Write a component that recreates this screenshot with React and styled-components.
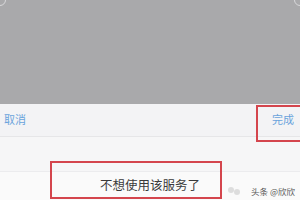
import styled, { createGlobalStyle } from 'styled-components';

const Global = createGlobalStyle`
	html, body {
		margin: 0;
		padding: 0;
	}
	body {
		width: 300px;
		height: 200px;
		overflow: hidden;
		background: #f7f7f8;
		font-family: "Noto Sans CJK SC", "Noto Sans", sans-serif;
	}
`

const Screen = styled.div`
	position: relative;
	width: 300px;
	height: 200px;
	overflow: hidden;
	display: flex;
	flex-direction: column;
`

const Mask = styled.div`
	height: 104px;
	background: #a9a9ab;
	flex-shrink: 0;
	position: relative;

	&::before, &::after{
		content: '';
		position: absolute;
		top: -6px;
		width: 10px;
		height: 10px;
		border: 1px solid #d8d8da;
		border-radius: 50%;
	}
	&::before{ left: -6px; }
	&::after{ right: -6px; }
`

const Toolbar = styled.div`
	height: 32px;
	display: flex;
	align-items: center;
	justify-content: space-between;
	padding: 0 6px 0 4px;
	background: #f3f3f5;
	border-bottom: 1px solid #e6e6e8;
	flex-shrink: 0;
`

const ToolButton = styled.span`
	font-size: 11px;
	line-height: 14px;
	color: #6aa3dc;
	margin-top: -2px;
`

const Picker = styled.div`
	flex: 1;
	display: flex;
	flex-direction: column;
	background: #f8f8f9;
`

const Option = styled.div`
	height: ${p => p.h}px;
	display: flex;
	align-items: flex-start;
	justify-content: center;
	font-size: 12.5px;
	line-height: 16px;
	color: #3a3a3a;
	border-bottom: ${p => p.line ? '1px solid #ececee' : 'none'};
	background: ${p => p.bg};
	padding-top: ${p => p.pt || 0}px;
	box-sizing: border-box;
`

const Mark = styled.div`
	position: absolute;
	left: ${p => p.x}px;
	top: ${p => p.y}px;
	width: ${p => p.w}px;
	height: ${p => p.h}px;
	border: 2px solid #d4454d;
	box-sizing: border-box;
`

const Watermark = styled.div`
	position: absolute;
	right: 5px;
	bottom: 3px;
	display: flex;
	align-items: center;
	gap: 6px;
	font-size: 8.5px;
	color: #555;
`

const Logo = styled.span`
	display: inline-flex;
	opacity: 0.35;
	margin-right: 4px;
`

export default function App(){
	return(
		<Screen>
			<Global />
			<Mask />
			<Toolbar>
				<ToolButton>取消</ToolButton>
				<ToolButton>完成</ToolButton>
			</Toolbar>
			<Picker>
				<Option h={35} line bg="#f6f6f7" />
				<Option h={30} pt={5} bg="#fafafa">不想使用该服务了</Option>
			</Picker>

			<Mark x={256} y={105} w={50} h={37} />
			<Mark x={50} y={161} w={172} h={38} />

			<Watermark>
				<Logo>
					<svg width="14" height="12" viewBox="0 0 14 12">
						<circle cx="4" cy="5" r="3" fill="#aaa" />
						<circle cx="10" cy="7" r="3" fill="#aaa" />
					</svg>
				</Logo>
				<span>头条 @欣欣</span>
			</Watermark>
		</Screen>
	)
}
